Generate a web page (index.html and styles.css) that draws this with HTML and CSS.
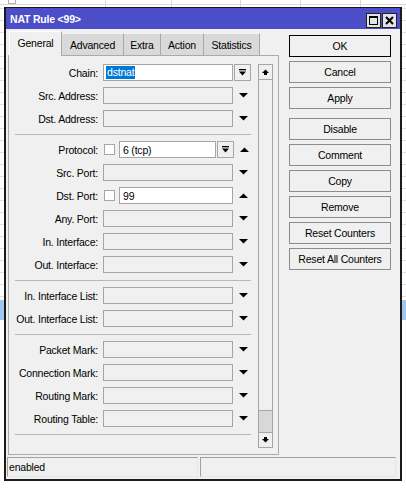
FILE: index.html
```html
<!DOCTYPE html>
<html lang="en">
<head>
<meta charset="utf-8">
<title>NAT Rule &lt;99&gt;</title>
<link rel="stylesheet" href="styles.css">
</head>
<body>
<div class="bgstrip">
  <div class="bgcell w1"><div class="bgcb"></div></div>
  <div class="bgcell w2"></div>
  <div class="bgcell w3"></div>
  <div class="bgcell w4"></div>
  <div class="bgcell w5"></div>
</div>
<div class="window">
  <div class="titlebar">
    <span class="title">NAT Rule &lt;99&gt;</span>
    <div class="tbtns">
      <span class="tbtn"><svg width="9" height="9" viewBox="0 0 9 9"><rect x="0.5" y="0.5" width="8" height="8" fill="none" stroke="#000"/><rect x="0" y="0" width="9" height="2" fill="#000"/></svg></span>
      <span class="tbtn"><svg width="9" height="9" viewBox="0 0 9 9"><path d="M1 1 L8 8 M8 1 L1 8" stroke="#000" stroke-width="2"/></svg></span>
    </div>
  </div>
  <div class="main">
    <div class="leftcol">
      <div class="tabs">
        <span class="tab active t-general">General</span>
        <span class="tab t-advanced">Advanced</span>
        <span class="tab t-extra">Extra</span>
        <span class="tab t-action">Action</span>
        <span class="tab t-stats">Statistics</span>
      </div>
      <div class="panel">
        <div class="form">
          <div class="row">
            <span class="lbl">Chain:</span>
            <span class="field on"><span class="sel">dstnat</span></span>
            <span class="slot"><span class="ddbtn"><svg width="7" height="7" viewBox="0 0 7 7"><rect x="0" y="0" width="7" height="1.3" fill="#000"/><polygon points="0,2.5 7,2.5 3.5,6.5" fill="#000"/></svg></span></span>
          </div>
          <div class="row">
            <span class="lbl">Src. Address:</span>
            <span class="field"></span>
            <span class="slot"><svg class="arr" width="9" height="5" viewBox="0 0 9 5"><polygon points="0,0 9,0 4.5,4.5" fill="#000"/></svg></span>
          </div>
          <div class="row">
            <span class="lbl">Dst. Address:</span>
            <span class="field"></span>
            <span class="slot"><svg class="arr" width="9" height="5" viewBox="0 0 9 5"><polygon points="0,0 9,0 4.5,4.5" fill="#000"/></svg></span>
          </div>
          <div class="sep"></div>
          <div class="row">
            <span class="lbl">Protocol:</span>
            <span class="cb"></span>
            <span class="field on short">6 (tcp)</span>
            <span class="ddbtn"><svg width="7" height="7" viewBox="0 0 7 7"><rect x="0" y="0" width="7" height="1.3" fill="#000"/><polygon points="0,2.5 7,2.5 3.5,6.5" fill="#000"/></svg></span>
            <span class="slot"><svg class="arr" width="9" height="5" viewBox="0 0 9 5"><polygon points="0,5 9,5 4.5,0.5" fill="#000"/></svg></span>
          </div>
          <div class="row">
            <span class="lbl">Src. Port:</span>
            <span class="field"></span>
            <span class="slot"><svg class="arr" width="9" height="5" viewBox="0 0 9 5"><polygon points="0,0 9,0 4.5,4.5" fill="#000"/></svg></span>
          </div>
          <div class="row">
            <span class="lbl">Dst. Port:</span>
            <span class="cb"></span>
            <span class="field on mid">99</span>
            <span class="slot"><svg class="arr" width="9" height="5" viewBox="0 0 9 5"><polygon points="0,5 9,5 4.5,0.5" fill="#000"/></svg></span>
          </div>
          <div class="row">
            <span class="lbl">Any. Port:</span>
            <span class="field"></span>
            <span class="slot"><svg class="arr" width="9" height="5" viewBox="0 0 9 5"><polygon points="0,0 9,0 4.5,4.5" fill="#000"/></svg></span>
          </div>
          <div class="row">
            <span class="lbl">In. Interface:</span>
            <span class="field"></span>
            <span class="slot"><svg class="arr" width="9" height="5" viewBox="0 0 9 5"><polygon points="0,0 9,0 4.5,4.5" fill="#000"/></svg></span>
          </div>
          <div class="row">
            <span class="lbl">Out. Interface:</span>
            <span class="field"></span>
            <span class="slot"><svg class="arr" width="9" height="5" viewBox="0 0 9 5"><polygon points="0,0 9,0 4.5,4.5" fill="#000"/></svg></span>
          </div>
          <div class="sep"></div>
          <div class="row">
            <span class="lbl">In. Interface List:</span>
            <span class="field"></span>
            <span class="slot"><svg class="arr" width="9" height="5" viewBox="0 0 9 5"><polygon points="0,0 9,0 4.5,4.5" fill="#000"/></svg></span>
          </div>
          <div class="row">
            <span class="lbl">Out. Interface List:</span>
            <span class="field"></span>
            <span class="slot"><svg class="arr" width="9" height="5" viewBox="0 0 9 5"><polygon points="0,0 9,0 4.5,4.5" fill="#000"/></svg></span>
          </div>
          <div class="sep"></div>
          <div class="row">
            <span class="lbl">Packet Mark:</span>
            <span class="field"></span>
            <span class="slot"><svg class="arr" width="9" height="5" viewBox="0 0 9 5"><polygon points="0,0 9,0 4.5,4.5" fill="#000"/></svg></span>
          </div>
          <div class="row">
            <span class="lbl">Connection Mark:</span>
            <span class="field"></span>
            <span class="slot"><svg class="arr" width="9" height="5" viewBox="0 0 9 5"><polygon points="0,0 9,0 4.5,4.5" fill="#000"/></svg></span>
          </div>
          <div class="row">
            <span class="lbl">Routing Mark:</span>
            <span class="field"></span>
            <span class="slot"><svg class="arr" width="9" height="5" viewBox="0 0 9 5"><polygon points="0,0 9,0 4.5,4.5" fill="#000"/></svg></span>
          </div>
          <div class="row">
            <span class="lbl">Routing Table:</span>
            <span class="field"></span>
            <span class="slot"><svg class="arr" width="9" height="5" viewBox="0 0 9 5"><polygon points="0,0 9,0 4.5,4.5" fill="#000"/></svg></span>
          </div>
          <div class="sep"></div>
        </div>
        <div class="scrollbar">
          <div class="sb-btn"><svg width="7" height="6" viewBox="0 0 7 6"><polygon points="0,4 7,4 3.5,0.5" fill="#000"/><rect x="2" y="4" width="3" height="2" fill="#000"/></svg></div>
          <div class="sb-track"><div class="sb-thumb"></div></div>
          <div class="sb-btn"><svg width="7" height="6" viewBox="0 0 7 6"><rect x="2" y="0" width="3" height="2" fill="#000"/><polygon points="0,2 7,2 3.5,5.5" fill="#000"/></svg></div>
        </div>
      </div>
    </div>
    <div class="rightcol">
      <button class="btn default">OK</button>
      <button class="btn">Cancel</button>
      <button class="btn group-end">Apply</button>
      <button class="btn">Disable</button>
      <button class="btn">Comment</button>
      <button class="btn">Copy</button>
      <button class="btn">Remove</button>
      <button class="btn">Reset Counters</button>
      <button class="btn">Reset All Counters</button>
    </div>
  </div>
  <div class="statusbar">
    <div class="sbox s1">enabled</div>
    <div class="sbox s2"></div>
  </div>
</div>
</body>
</html>
```
FILE: styles.css
```css
html, body {
  margin: 0;
  padding: 0;
}
body {
  width: 406px;
  height: 489px;
  overflow: hidden;
  font-family: "Liberation Sans", Arial, sans-serif;
  font-size: 10.5px;
  letter-spacing: -0.2px;
  color: #000;
  background:
    linear-gradient(#9fc7ef, #9fc7ef) 0 300px / 100% 20px no-repeat,
    linear-gradient(#d8d8d8, #d8d8d8) 0 4px / 100% 1px no-repeat,
    repeating-linear-gradient(to bottom, transparent 0 8px, #e0e0e0 8px 9px, transparent 9px 12px) 0 0 / 100% 300px no-repeat,
    #ffffff;
}

/* underlying list (visible above the window) */
.bgstrip {
  display: flex;
  height: 7px;
}
.bgcell {
  border-right: 1px solid #d8d8d8;
}
.w1 { width: 105px; }
.w2 { width: 65px; }
.w3 { width: 68px; }
.w4 { width: 59px; }
.w5 { width: 59px; }
.bgcb {
  width: 6px;
  height: 3px;
  margin-left: 8px;
  border: 1px solid #b0b0b0;
  border-top: none;
  background: #fff;
}

/* window */
.window {
  margin-left: 4px;
  width: 398px;
  box-sizing: border-box;
  border: 2px solid #1a1a1a;
  border-top-width: 1px;
  background: #f0f0f0;
}
.titlebar {
  height: 21px;
  background: #4b4ec6;
  display: flex;
  align-items: center;
  justify-content: space-between;
  padding: 0 3px 0 4px;
}
.title {
  color: #fff;
  font-weight: bold;
  font-size: 10.5px;
}
.tbtns {
  display: flex;
  gap: 1px;
  align-self: flex-end;
  margin-bottom: 1px;
}
.tbtn {
  width: 15px;
  height: 15px;
  box-sizing: border-box;
  border: 1px solid #222;
  background: #e4e4e4;
  display: flex;
  align-items: center;
  justify-content: center;
}

.main {
  display: flex;
  gap: 10px;
  padding-left: 2px;
}
.leftcol {
  width: 271px;
  padding-top: 2px;
}

/* tabs */
.tabs {
  display: flex;
  align-items: flex-end;
  height: 24px;
  padding-left: 1px;
}
.tab {
  height: 22px;
  box-sizing: border-box;
  display: flex;
  align-items: center;
  justify-content: center;
  white-space: nowrap;
  background: #d9d9d9;
  border-top: 1px solid #f4f4f4;
  border-right: 1px solid #a8a8a8;
}
.tab.active {
  height: 25px;
  margin-bottom: -1px;
  background: #f0f0f0;
  border-top: 1px solid #ffffff;
  border-left: 1px solid #ffffff;
  border-right: 1px solid #a8a8a8;
  padding-bottom: 2px;
  position: relative;
  z-index: 1;
}
.t-general { width: 53px; }
.t-advanced { width: 62px; }
.t-extra { width: 37px; }
.t-action { width: 43px; }
.t-stats { width: 56px; }

/* panel */
.panel {
  height: 400px;
  box-sizing: border-box;
  border: 1px solid #aaaaaa;
  display: flex;
  padding-top: 8px;
}
.form {
  width: 248px;
  display: flex;
  flex-direction: column;
}
.row {
  display: flex;
  align-items: center;
  height: 17px;
  margin-bottom: 6px;
}
.lbl {
  width: 89px;
  margin-right: 5px;
  text-align: right;
  white-space: nowrap;
}
.field {
  width: 130px;
  height: 17px;
  box-sizing: border-box;
  border: 1px solid #a6a6a6;
  background: #f0f0f0;
  padding-left: 3px;
  display: flex;
  align-items: center;
  white-space: nowrap;
}
.field.on {
  background: #ffffff;
}
.field.short {
  width: 97px;
}
.field.mid {
  width: 114px;
}
.row:first-child .field {
  padding-left: 2px;
}
.sel {
  background: #0078d7;
  color: #fff;
  line-height: 13px;
  padding: 0 1px;
}
.cb {
  width: 11px;
  height: 11px;
  box-sizing: border-box;
  border: 1px solid #a6a6a6;
  background: #fff;
  margin: 0 4px 0 1px;
}
.ddbtn {
  width: 17px;
  height: 17px;
  box-sizing: border-box;
  border: 1px solid #a6a6a6;
  background: #f0f0f0;
  margin-left: 1px;
  display: flex;
  align-items: center;
  justify-content: center;
}
.slot {
  width: 18px;
  height: 17px;
  display: flex;
  align-items: center;
}
.arr {
  margin-left: 6px;
}
.sep {
  width: 236px;
  height: 1px;
  margin: 1px 0 6px 6px;
  background: #b8b8b8;
}

/* scrollbar */
.scrollbar {
  width: 15px;
  height: 384px;
  margin-left: 1px;
  display: flex;
  flex-direction: column;
}
.sb-btn {
  height: 16px;
  box-sizing: border-box;
  border: 1px solid #a6a6a6;
  background: #f0f0f0;
  display: flex;
  align-items: center;
  justify-content: center;
}
.sb-track {
  flex: 1;
  border-left: 1px solid #a6a6a6;
  border-right: 1px solid #a6a6a6;
  display: flex;
  flex-direction: column;
  justify-content: flex-end;
}
.sb-thumb {
  height: 22px;
  box-sizing: border-box;
  border-top: 1px solid #a6a6a6;
  background: #d8d8d8;
}

/* right buttons */
.rightcol {
  width: 102px;
  padding-top: 6px;
  display: flex;
  flex-direction: column;
}
.btn {
  width: 102px;
  height: 22px;
  margin: 0 0 4px 0;
  padding: 0;
  box-sizing: border-box;
  border: 1px solid #8c8c8c;
  background: #f0f0f0;
  font-family: inherit;
  font-size: 10.5px;
  letter-spacing: -0.2px;
  color: #000;
  text-align: center;
}
.btn.default {
  border-color: #000;
}
.btn.group-end {
  margin-bottom: 9px;
}

/* status bar */
.statusbar {
  display: flex;
  gap: 2px;
  padding: 2px 0 2px 1px;
}
.sbox {
  height: 20px;
  box-sizing: border-box;
  border: 1px solid #e6e6e6;
  border-top-color: #a0a0a0;
  border-left-color: #a0a0a0;
  padding-left: 1px;
  display: flex;
  align-items: center;
}
.s1 { width: 191px; }
.s2 { width: 196px; }
```
